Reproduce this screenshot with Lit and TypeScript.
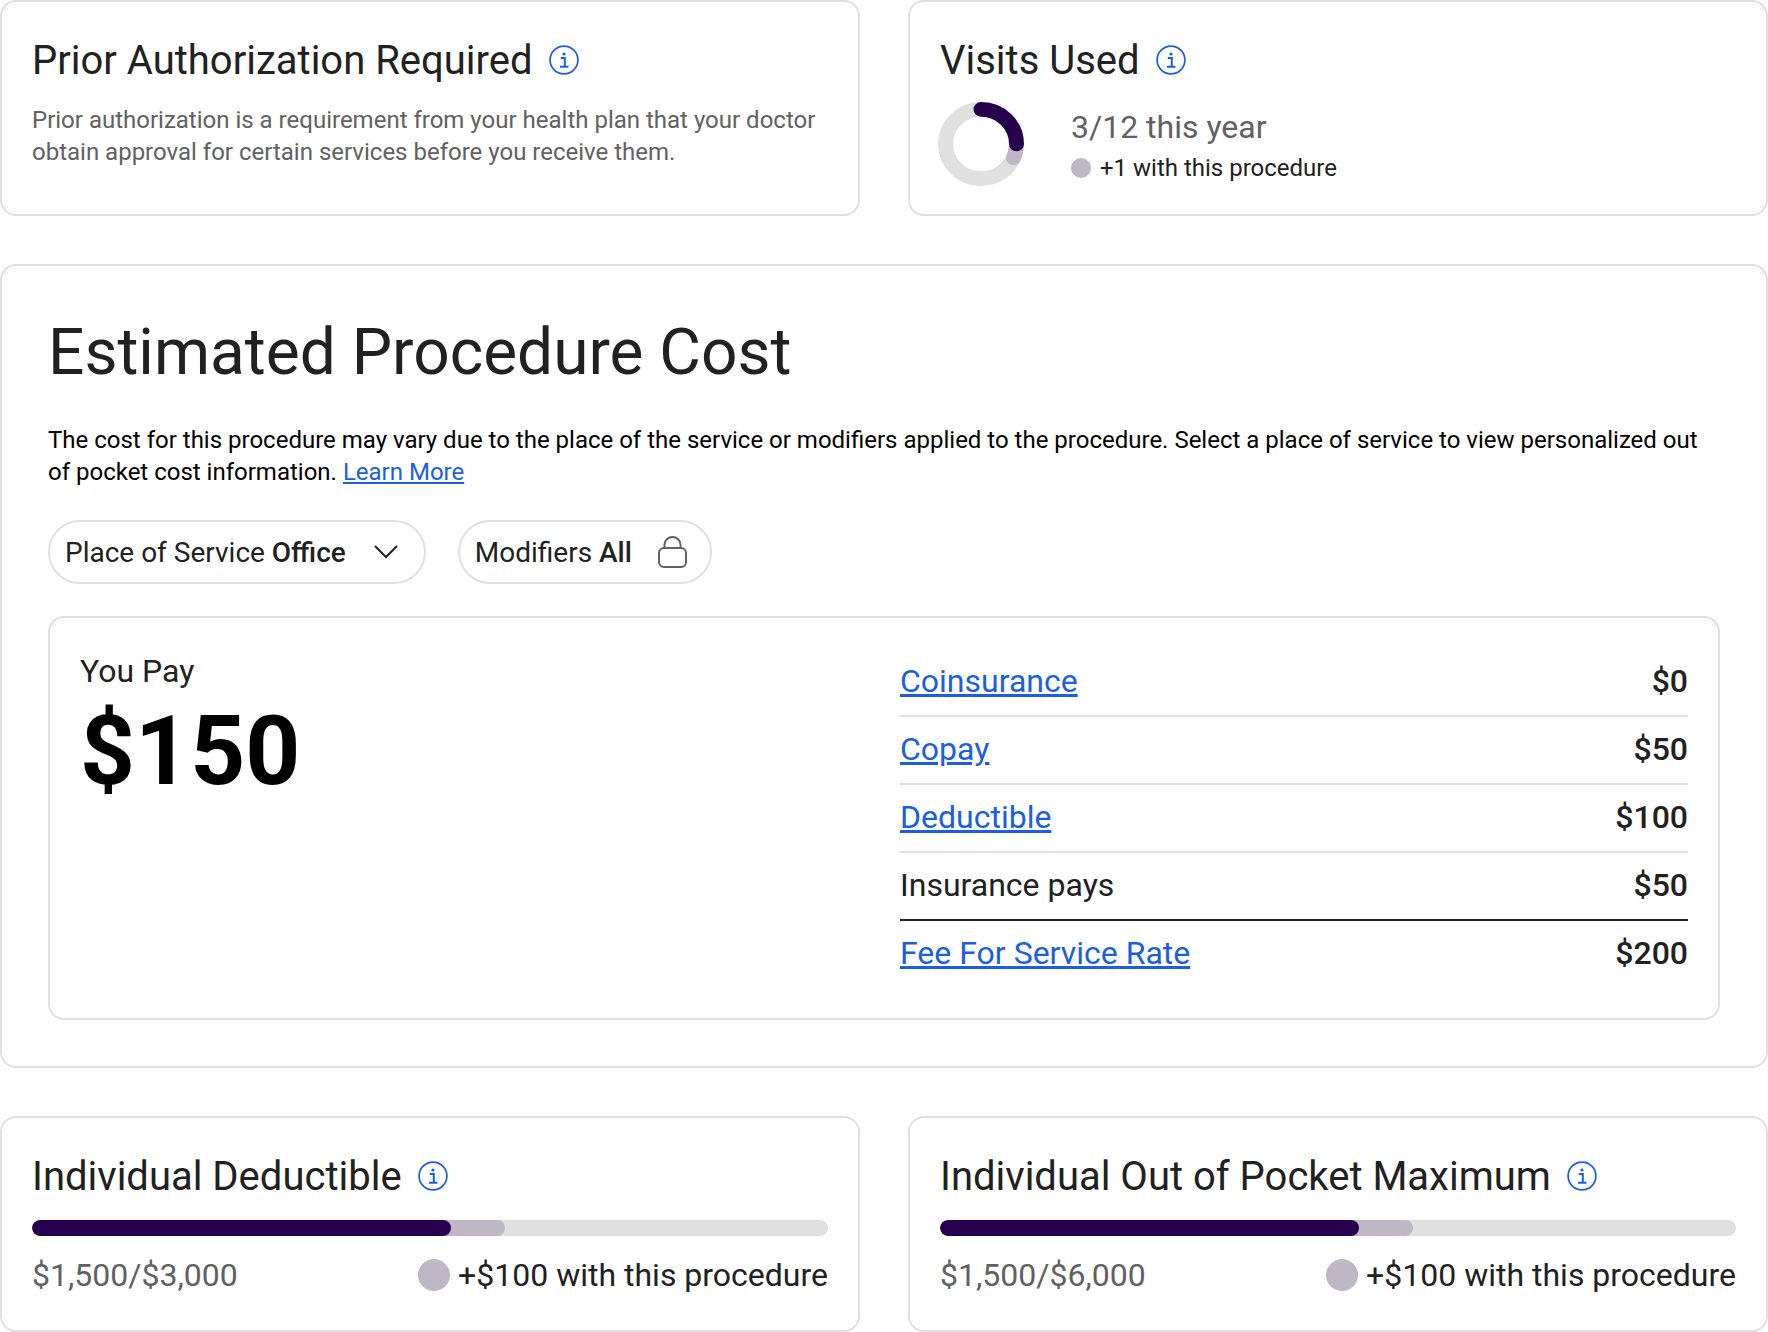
import { LitElement, html, css, svg } from "lit";
import { customElement } from "lit/decorators.js";

const info = html`<svg class="info" viewBox="0 0 30 30" aria-hidden="true"><circle cx="15" cy="15" r="13.9" fill="none" stroke="#1a5fe0" stroke-width="1.7"/><circle cx="15" cy="9" r="1.6" fill="#1a5fe0"/><path d="M11.8 13h4v8.6M11 21.7h8.4" fill="none" stroke="#1a5fe0" stroke-width="2"/></svg>`;

const rows: [string, string, boolean, boolean][] = [
  ["Coinsurance", "$0", true, false],
  ["Copay", "$50", true, false],
  ["Deductible", "$100", true, false],
  ["Insurance pays", "$50", false, true],
  ["Fee For Service Rate", "$200", true, false],
];

@customElement("app-root")
export class AppRoot extends LitElement {
  static styles = css`
    :host { display: block; width: 1768px; height: 1332px; overflow: hidden; background: #fff; font-family: Roboto, sans-serif; color: #212121; }
    * { box-sizing: border-box; }
    .page { display: flex; flex-direction: column; gap: 48px; }
    .two { display: grid; grid-template-columns: 860px 860px; gap: 48px; }
    .card { border: 2px solid #e0e0e0; border-radius: 16px; background: #fff; }
    .small { height: 216px; padding: 30px 30px 0; }
    .title { display: flex; align-items: center; gap: 16px; font-size: 40px; line-height: 58px; font-weight: 400; margin: 0; }
    .info { width: 30px; height: 30px; flex: none; margin-top: -2px; }
    .desc { margin: 14px 0 0; font-size: 24px; line-height: 32px; color: #616161; }
    .visits { display: flex; align-items: flex-start; margin-top: 12px; margin-left: -2px; }
    .donut { width: 86px; height: 84px; flex: none; }
    .vtext { margin-left: 47px; margin-top: 5px; }
    .count { font-size: 32px; line-height: 40px; color: #616161; }
    .plus1 { display: flex; align-items: center; gap: 9px; font-size: 24px; line-height: 32px; margin-top: 5px; }
    .dot { width: 20px; height: 20px; border-radius: 50%; background: #bfb6c6; flex: none; }
    .main { height: 804px; padding: 47px 46px 0; }
    h1 { font-size: 64px; line-height: 80px; font-weight: 400; margin: 0; }
    .lead { margin: 31px 0 0; font-size: 24px; line-height: 32px; color: #000; }
    a { color: #1a5fe0; text-decoration: underline; }
    .chips { display: flex; gap: 32px; margin-top: 32px; }
    .chip { height: 64px; border: 2px solid #e0e0e0; border-radius: 32px; display: flex; align-items: center; padding: 0 15px; font-size: 28px; }
    .chip b { font-weight: 500; }
    .chev { width: 26px; height: 16px; margin-left: 27px; margin-right: 10px; }
    .lock { width: 29px; height: 32px; margin-left: 26px; margin-right: 8px; }
    .pay { height: 404px; margin-top: 32px; border: 2px solid #e0e0e0; border-radius: 16px; padding: 31px 30px 0; display: grid; grid-template-columns: 1fr 788px; }
    .yp { font-size: 32px; line-height: 40px; margin-top: 2px; }
    .amt { font-size: 96px; line-height: 112px; font-weight: 700; color: #000; margin-top: 4px; }
    .row { height: 68px; display: flex; justify-content: space-between; align-items: center; padding-bottom: 2px; border-bottom: 2px solid #e0e0e0; font-size: 32px; }
    .row.dark { border-bottom-color: #212121; }
    .row:last-child { border-bottom: none; padding-bottom: 4px; }
    .row .v { font-weight: 500; }
    .bar { position: relative; height: 16px; background: #e0e0e0; border-radius: 8px; margin-top: 14px; overflow: hidden; }
    .seg { position: absolute; left: 0; top: 0; bottom: 0; border-radius: 8px; }
    .meta { display: flex; justify-content: space-between; align-items: center; margin-top: 19px; font-size: 32px; line-height: 40px; }
    .meta .l { color: #616161; }
    .meta .r { display: flex; align-items: center; gap: 8px; }
    .meta .dot { width: 32px; height: 32px; }
  `;

  bottom(title: string, amount: string) {
    return html`<section class="card small">
      <h2 class="title">${title} ${info}</h2>
      <div class="bar">
        <div class="seg" style="width:59.4%;background:#bfb6c6"></div>
        <div class="seg" style="width:52.7%;background:#26004f"></div>
      </div>
      <div class="meta"><span class="l">${amount}</span><span class="r"><span class="dot"></span>+$100 with this procedure</span></div>
    </section>`;
  }

  render() {
    return html`<div class="page">
      <div class="two">
        <section class="card small">
          <h2 class="title">Prior Authorization Required ${info}</h2>
          <p class="desc">Prior authorization is a requirement from your health plan that your doctor obtain approval for certain services before you receive them.</p>
        </section>
        <section class="card small">
          <h2 class="title">Visits Used ${info}</h2>
          <div class="visits">
            <svg class="donut" viewBox="0 0 86 86" preserveAspectRatio="none">
              ${svg`<circle cx="43" cy="43" r="35.5" fill="none" stroke="#e0e0e0" stroke-width="15"/>
              <path d="M78 48A35.5 35.5 0 0 1 75.6 57" fill="none" stroke="#bfb6c6" stroke-width="15" stroke-linecap="round"/>
              <path d="M43 7.5A35.5 35.5 0 0 1 78.5 43" fill="none" stroke="#26004f" stroke-width="15" stroke-linecap="round"/>`}
            </svg>
            <div class="vtext">
              <div class="count">3/12 this year</div>
              <div class="plus1"><span class="dot"></span>+1 with this procedure</div>
            </div>
          </div>
        </section>
      </div>
      <section class="card main">
        <h1>Estimated Procedure Cost</h1>
        <p class="lead">The cost for this procedure may vary due to the place of the service or modifiers applied to the procedure. Select a place of service to view personalized out of pocket cost information. <a href="#">Learn More</a></p>
        <div class="chips">
          <div class="chip"><span>Place of Service <b>Office</b></span>
            <svg class="chev" viewBox="0 0 26 16"><path d="M2 2l11 11L24 2" fill="none" stroke="#212121" stroke-width="2"/></svg></div>
          <div class="chip"><span>Modifiers <b>All</b></span>
            <svg class="lock" viewBox="0 0 29 32"><rect x="1" y="12" width="27" height="19" rx="5" fill="none" stroke="#616161" stroke-width="2"/><path d="M6.5 12V8.500a8 7.500 0 0 1 16 0V12" fill="none" stroke="#616161" stroke-width="2"/></svg></div>
        </div>
        <div class="pay">
          <div>
            <div class="yp">You Pay</div>
            <div class="amt">$150</div>
          </div>
          <div>
            ${rows.map(([k, v, link, dark]) => html`<div class="row ${dark ? "dark" : ""}">
              ${link ? html`<a href="#">${k}</a>` : html`<span>${k}</span>`}<span class="v">${v}</span>
            </div>`)}
          </div>
        </div>
      </section>
      <div class="two">
        ${this.bottom("Individual Deductible", "$1,500/$3,000")}
        ${this.bottom("Individual Out of Pocket Maximum", "$1,500/$6,000")}
      </div>
    </div>`;
  }
}
